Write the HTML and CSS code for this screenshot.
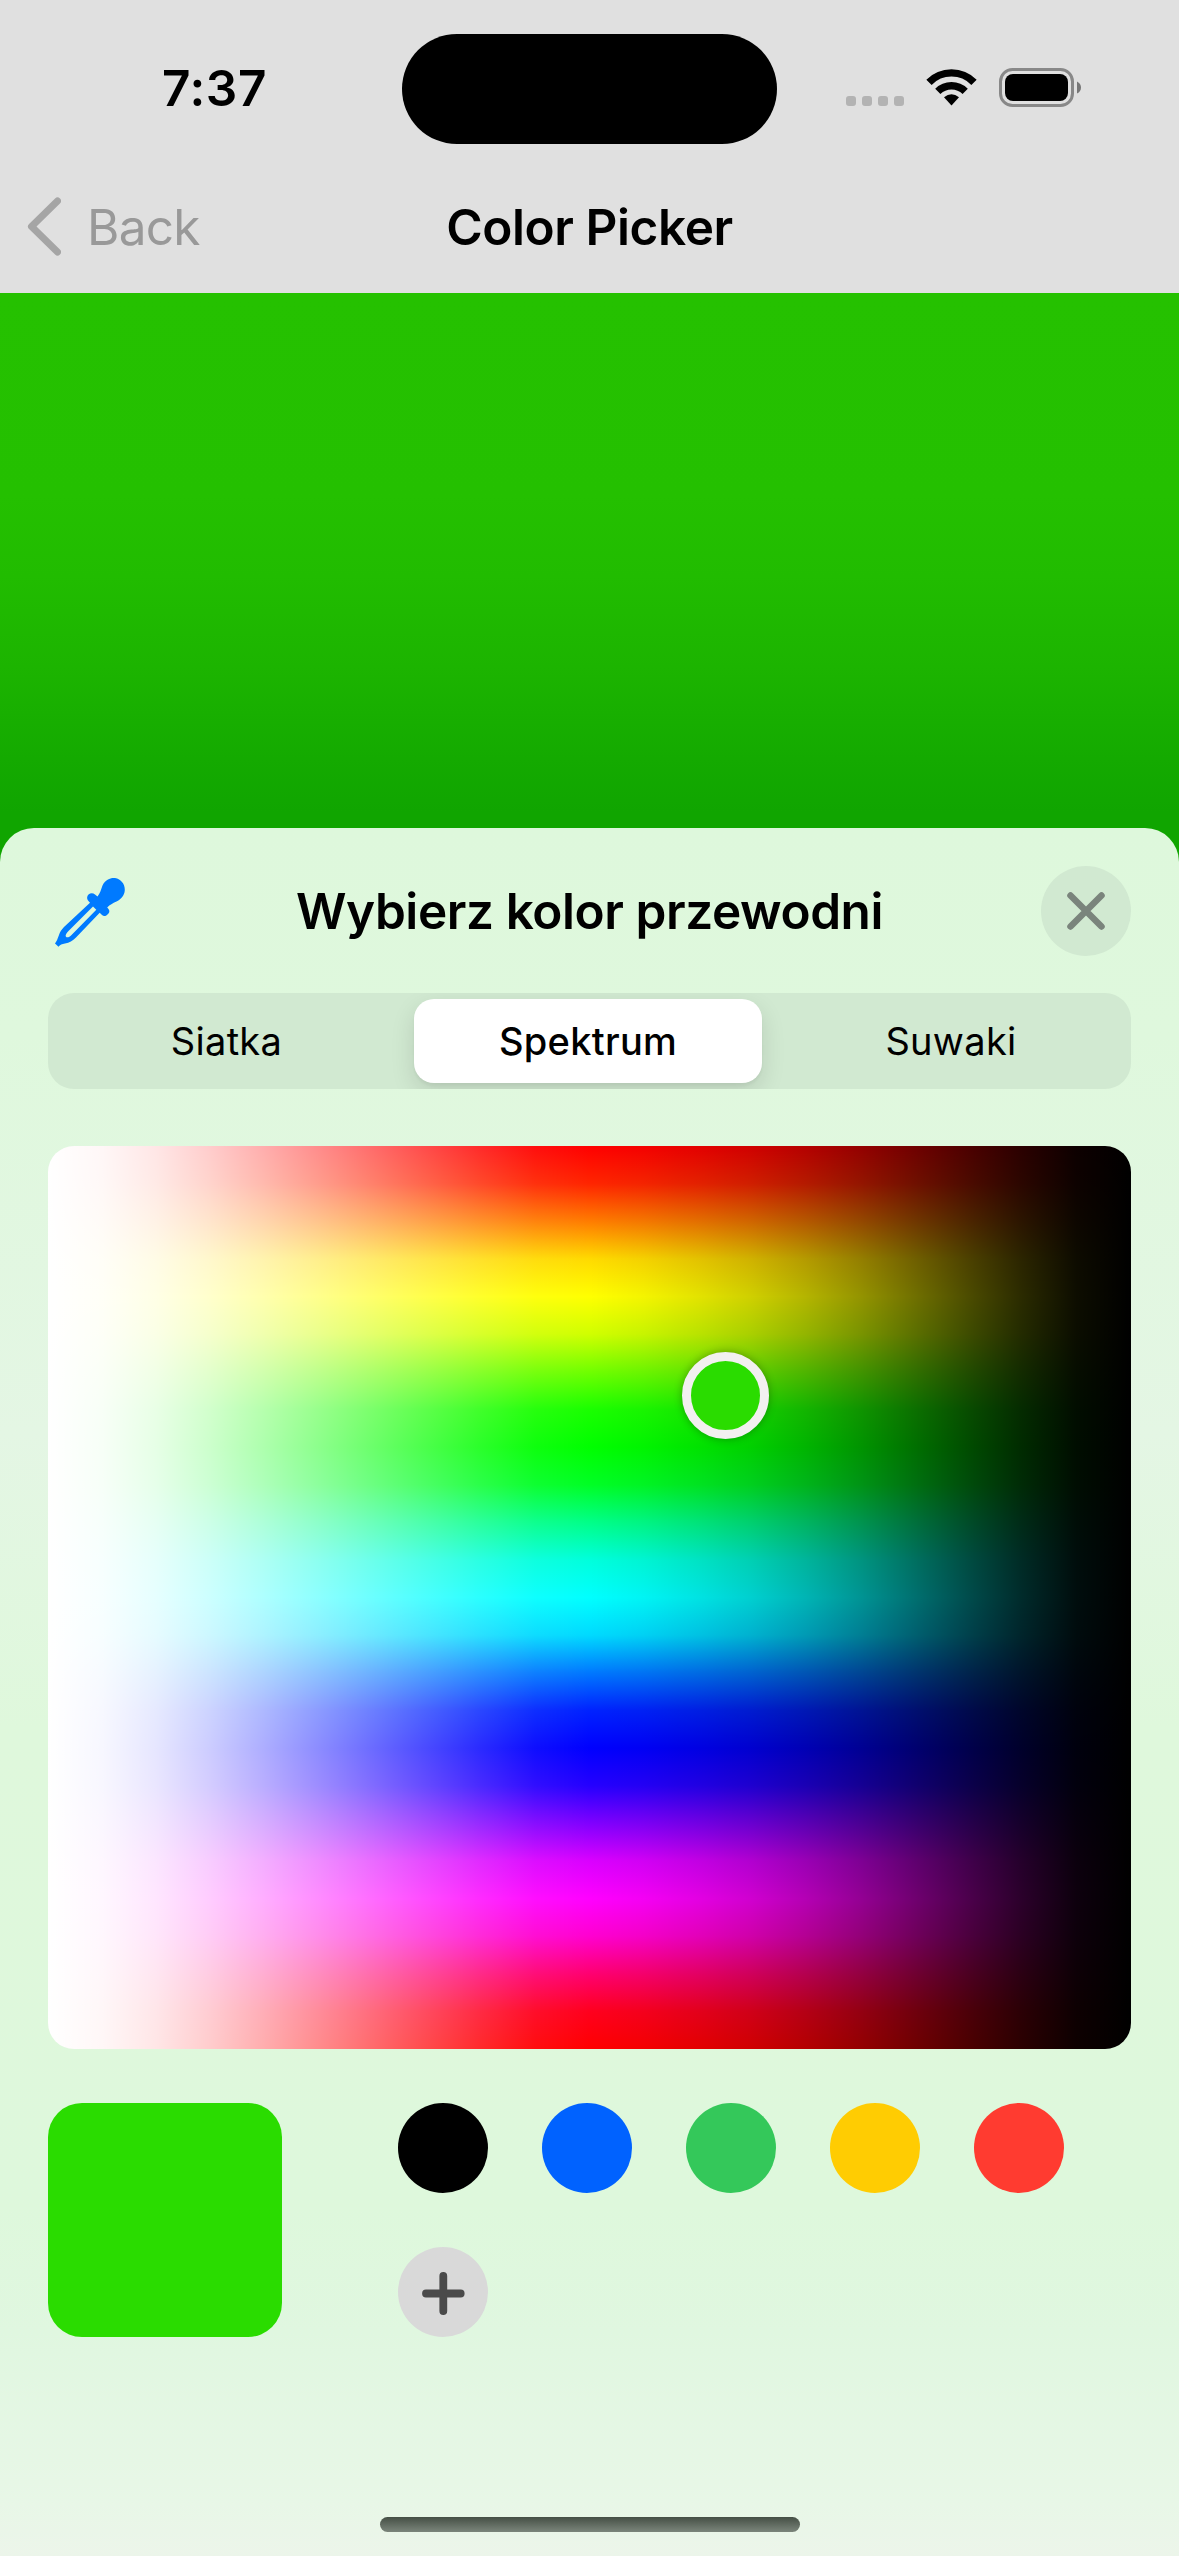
FILE: index.html
```html
<!DOCTYPE html>
<html lang="pl">
<head>
<meta charset="utf-8">
<title>Color Picker</title>
<link rel="stylesheet" href="styles.css">
</head>
<body>
<div class="screen">
  <header class="header">
    <div class="status">
      <div class="time"><span>7:37</span></div>
      <div class="island"></div>
      <div class="indicators">
        <svg class="indicator-icons" width="238" height="46" viewBox="0 0 238 46">
          <g fill="#b3b3b3">
            <rect x="0" y="28" width="10" height="10" rx="3"/>
            <rect x="16" y="28" width="10" height="10" rx="3"/>
            <rect x="32" y="28" width="10" height="10" rx="3"/>
            <rect x="48" y="28" width="10" height="10" rx="3"/>
          </g>
          <g fill="none" stroke="#000" stroke-width="7.4">
            <path d="M83 14.3 A31.5 31.5 0 0 1 128 14.3"/>
            <path d="M91.8 23.4 A19.5 19.5 0 0 1 119.2 23.4"/>
          </g>
          <path d="M98 29.3 Q105.500 23.300 113 29.300 L105.500 37.500Z"/>
          <rect x="154.500" y="1.500" width="72" height="36" rx="12" fill="none" stroke="#888" stroke-width="3"/>
          <rect x="159" y="6" width="63" height="27" rx="8"/>
          <path d="M231 13.500 Q235 15.500 235 19.500 T231 25.500Z" fill="#777"/>
        </svg>
      </div>
    </div>
    <nav class="nav">
      <div class="back">
        <svg width="36" height="60" viewBox="0 0 36 60"><path d="M32.500 4 L6.500 29.500 L32.500 55" fill="none" stroke="#a5a5a5" stroke-width="7" stroke-linecap="round" stroke-linejoin="round"/></svg>
        <span class="back-label">Back</span>
      </div>
      <h1 class="nav-title"><span>Color Picker</span></h1>
    </nav>
  </header>
  <div class="canvas"></div>
  <main class="sheet">
    <div class="sheet-head">
      <svg class="dropper" width="90" height="90" viewBox="0 0 90 90">
        <g transform="translate(-48 -866)">
          <path fill="#007aff" fill-rule="evenodd" d="M102.500 885.500 C105.500 879 111 877.500 115 878 C121 879 125 884 124.800 890 C124.500 896 120.500 899.500 116.500 901.500 C112.500 903.500 110 904.500 107.200 907.500 L108.500 909 C110 911 109.500 913 107.500 914.500 C105.500 916.500 103.500 916.500 102 915 L99.700 912.700 L76 937.500 C72.500 941 69.500 942.500 65 943.500 C62 944.200 60 944.500 58.500 946.800 L55 943.500 C57 941 57.500 938.500 59 935 C60 932 61.500 929.500 64 927 L90 902.800 L88 900.500 C86.500 898.500 87 896 88.500 894.500 C90.500 892.800 93 892.800 95 894.500 L97.500 896.500 C100 893.500 101 889.500 102.500 885.500 Z M93 906.500 L68.500 931 C66.500 933 65.200 935 65.800 936.500 C67 938.300 69.500 937 71.500 935 L96.300 909.800 Z"/>
        </g>
      </svg>
      <h2 class="sheet-title"><span>Wybierz kolor przewodni</span></h2>
      <div class="close">
        <svg width="44" height="44" viewBox="0 0 44 44"><path d="M6.500 6.500 L37.500 37.500 M37.500 6.500 L6.500 37.500" stroke="#7a847c" stroke-width="6.500" stroke-linecap="round"/></svg>
      </div>
    </div>
    <div class="segments">
      <div class="segment first"><span>Siatka</span></div>
      <div class="segment selected"><span>Spektrum</span></div>
      <div class="segment last"><span>Suwaki</span></div>
    </div>
    <div class="spectrum"><div class="knob"></div></div>
    <div class="palette">
      <div class="current"></div>
      <div class="swatches">
        <div class="swatch black"></div>
        <div class="swatch blue"></div>
        <div class="swatch green"></div>
        <div class="swatch yellow"></div>
        <div class="swatch red"></div>
        <div class="swatch add">
          <svg width="90" height="90" viewBox="0 0 90 90"><path d="M45.300 29 V64 M28 46.500 H62.700" stroke="#4a4a4a" stroke-width="7.800" stroke-linecap="round"/></svg>
        </div>
      </div>
    </div>
    <div class="home"></div>
  </main>
</div>
</body>
</html>
```
FILE: styles.css
```css
* { box-sizing: border-box; }

body {
  margin: 0;
  background: #10a500;
  font-family: Inter, "Liberation Sans", sans-serif;
  color: #000;
}

.screen {
  width: 1179px;
  height: 2556px;
  display: flex;
  flex-direction: column;
  overflow: hidden;
}

.header {
  height: 293px;
  background: #e0e0e0;
  display: flex;
  flex-direction: column;
}

.status {
  height: 178px;
  padding-top: 34px;
  display: grid;
  grid-template-columns: 402px 375px 402px;
}

.time {
  height: 110px;
  padding-left: 162px;
  font-size: 49.500px;
  font-weight: 600;
  line-height: 108px;
  letter-spacing: 0.600px;
}

.island {
  height: 110px;
  border-radius: 55px;
  background: #000;
}

.indicators { padding: 34px 0 0 69px; }
.indicator-icons { display: block; }

.nav {
  height: 98px;
  display: grid;
  grid-template-columns: 402px 375px 402px;
  align-items: center;
}

.back {
  display: flex;
  align-items: center;
  gap: 26px;
  padding-left: 25px;
}

.back-label {
  font-size: 49.500px;
  color: #999;
  letter-spacing: -0.700px;
}

.nav-title, .sheet-title {
  margin: 0;
  font-size: 49.500px;
  font-weight: 600;
  line-height: 60px;
  text-align: center;
  white-space: nowrap;
  letter-spacing: -0.420px;
}

.canvas {
  height: 535px;
  background: linear-gradient(#25c100 0%, #24c000 38%, #21bc00 53%, #1cb400 70%, #14aa00 87%, #10a500 97%);
}

.sheet {
  height: 1728px;
  border-radius: 34px 34px 0 0;
  padding: 38px 48px 0;
  display: flex;
  flex-direction: column;
  background: linear-gradient(#def8dc 0%, #dff8dd 12%, #e4f6e4 35%, #dff8dc 52%, #def8dc 80%, #e0f7e0 87%, #e8f7e7 97%, #ecf5ea 100%);
}

.sheet-head {
  height: 90px;
  display: grid;
  grid-template-columns: 90px 1fr 90px;
  align-items: center;
}

.close {
  width: 90px;
  height: 90px;
  border-radius: 50%;
  background: #d1e9d1;
  display: flex;
  align-items: center;
  justify-content: center;
}

.segments {
  margin-top: 37px;
  height: 96px;
  padding: 6px;
  border-radius: 26px;
  background: #d1e9d1;
  overflow: hidden;
  display: grid;
  grid-template-columns: 360px 348px 363px;
}

.segment {
  display: flex;
  align-items: center;
  justify-content: center;
  font-size: 38px;
  letter-spacing: 0.300px;
}

.segment.first { padding-right: 15px; }
.segment.last { padding-left: 15px; }

.segment.selected {
  background: #fff;
  border-radius: 20px;
  font-weight: 550;
  box-shadow: 0 9px 24px rgba(0, 0, 0, 0.120), 0 3px 3px rgba(0, 0, 0, 0.040);
}

.spectrum {
  position: relative;
  margin-top: 57px;
  height: 903px;
  border-radius: 26px;
  background:
    linear-gradient(to right,
      #fff 0%, rgba(255, 255, 255, 0.970) 5%, rgba(255, 255, 255, 0.900) 10%,
      rgba(255, 255, 255, 0.800) 15%, rgba(255, 255, 255, 0.680) 20%,
      rgba(255, 255, 255, 0.550) 25%, rgba(255, 255, 255, 0.420) 30%,
      rgba(255, 255, 255, 0.290) 35%, rgba(255, 255, 255, 0.165) 40%,
      rgba(255, 255, 255, 0.055) 45%, rgba(255, 255, 255, 0) 50%),
    linear-gradient(to right,
      rgba(0, 0, 0, 0) 50%, rgba(0, 0, 0, 0.045) 55%, rgba(0, 0, 0, 0.110) 60%,
      rgba(0, 0, 0, 0.190) 65%, rgba(0, 0, 0, 0.295) 70%, rgba(0, 0, 0, 0.420) 75%,
      rgba(0, 0, 0, 0.560) 80%, rgba(0, 0, 0, 0.700) 85%, rgba(0, 0, 0, 0.835) 90%,
      rgba(0, 0, 0, 0.950) 95%, #000 100%),
    linear-gradient(
      #f00 0%, #ff2500 4.167%, #ff7c00 8.333%, #ffda00 12.500%,
      #ff0 16.667%, #d0ff00 20.833%, #70ff00 25%, #1aff00 29.167%,
      #0f0 33.333%, #00ff25 37.500%, #00ff88 41.667%, #00ffdc 45.833%,
      #0ff 50%, #00daff 54.167%, #0078ff 58.333%, #0022ff 62.500%,
      #00f 66.667%, #2500ff 70.833%, #8000ff 75%, #da00ff 79.167%,
      #f0f 83.333%, #ff00d0 87.500%, #ff0070 91.667%, #ff001e 95.833%, #f00 100%);
}

.knob {
  position: absolute;
  left: 634px;
  top: 206px;
  width: 87px;
  height: 87px;
  border-radius: 50%;
  border: 9px solid #f2f0f0;
  background: #2adc00;
  box-shadow: 0 0 9px rgba(0, 0, 0, 0.300);
}

.palette {
  margin-top: 54px;
  display: flex;
  gap: 116px;
}

.current {
  width: 234px;
  height: 234px;
  border-radius: 34px;
  background: #2adc00;
}

.swatches {
  display: grid;
  grid-template-columns: repeat(5, 90px);
  gap: 54px;
}

.swatch {
  width: 90px;
  height: 90px;
  border-radius: 50%;
}

.black { background: #000; }
.blue { background: #0062ff; }
.green { background: #34c85a; }
.yellow { background: #ffcc02; }
.red { background: #ff3b30; }
.add { background: #d9d9d9; }

.home {
  margin: 180px auto 0;
  width: 420px;
  height: 15px;
  border-radius: 8px;
  background: linear-gradient(#454f45, #7b857b);
}
```
